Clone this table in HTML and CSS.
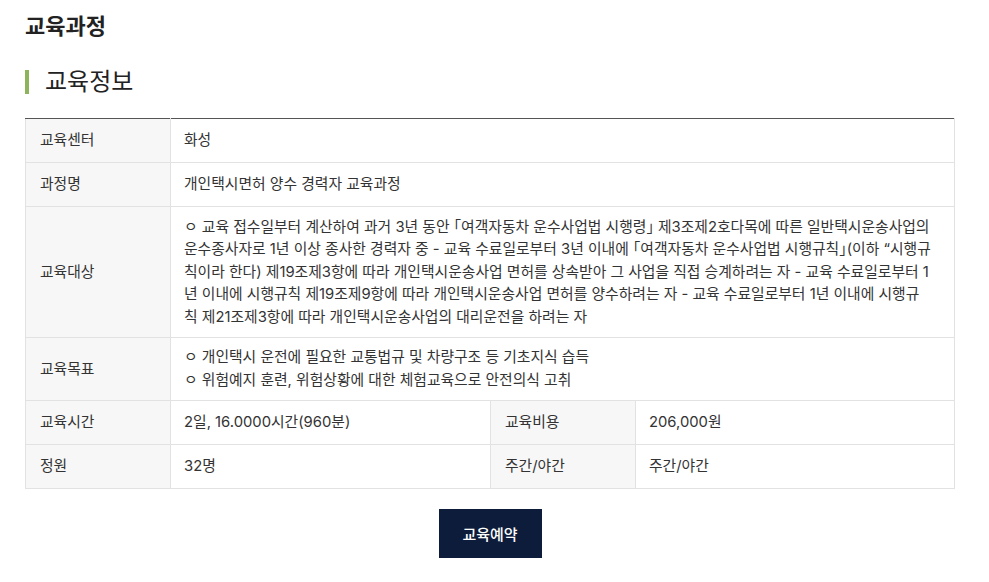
FILE: index.html
```html
<!DOCTYPE html>
<html lang="ko">
<head>
<meta charset="utf-8">
<link rel="stylesheet" href="styles.css">
</head>
<body>
<div class="page">
  <h1 class="page-title">교육과정</h1>
  <h2 class="section-title">교육정보</h2>
  <table class="info">
    <colgroup>
      <col class="c-label"><col class="c-val"><col class="c-label"><col>
    </colgroup>
    <tr><th>교육센터</th><td colspan="3">화성</td></tr>
    <tr><th>과정명</th><td colspan="3">개인택시면허 양수 경력자 교육과정</td></tr>
    <tr><th>교육대상</th><td colspan="3">ㅇ 교육 접수일부터 계산하여 과거 3년 동안 <span class="br">「여객자동차 운수사업법 시행령」</span> 제3조제2호다목에 따른 일반택시운송사업의 운수종사자로 1년 이상 종사한 경력자 중 - 교육 수료일로부터 3년 이내에 <span class="br">「여객자동차 운수사업법 시행규칙」</span>(이하 “시행규칙이라 한다) 제19조제3항에 따라 개인택시운송사업 면허를 상속받아 그 사업을 직접 승계하려는 자 - 교육 수료일로부터 1년 이내에 시행규칙 제19조제9항에 따라 개인택시운송사업 면허를 양수하려는 자 - 교육 수료일로부터 1년 이내에 시행규<br>칙 제21조제3항에 따라 개인택시운송사업의 대리운전을 하려는 자</td></tr>
    <tr><th>교육목표</th><td colspan="3">ㅇ 개인택시 운전에 필요한 교통법규 및 차량구조 등 기초지식 습득<br>ㅇ 위험예지 훈련, 위험상황에 대한 체험교육으로 안전의식 고취</td></tr>
    <tr><th>교육시간</th><td>2일, 16.0000시간(960분)</td><th>교육비용</th><td>206,000원</td></tr>
    <tr><th>정원</th><td>32명</td><th>주간/야간</th><td>주간/야간</td></tr>
  </table>
  <div class="actions"><button class="btn">교육예약</button></div>
</div>
</body>
</html>
```

FILE: styles.css
```css
html, body { margin: 0; padding: 0; background: #fff; }
body {
  font-family: Inter, "Noto Sans CJK KR", "Noto Sans", sans-serif;
  color: #333;
}
.page { padding: 8px 34px 0 25px; }
.page-title {
  margin: 0;
  font-size: 22px;
  font-weight: 700;
  line-height: 36px;
  color: #222;
}
.section-title {
  margin: 26px 0 0;
  padding-left: 16px;
  border-left: 4px solid #8db35c;
  font-size: 24px;
  font-weight: 400;
  line-height: 24px;
  color: #222;
}
.info {
  margin-top: 24px;
  width: 930px;
  border-collapse: collapse;
  border-top: 1px solid #555;
  table-layout: fixed;
  font-size: 14.8px;
  line-height: 22.6px;
}
.c-label { width: 145px; }
.c-val { width: 320px; }
.info tr { height: 44px; }
.info th, .info td {
  border: 1px solid #e2e2e2;
  padding: 8.5px 12px 8.5px 13px;
  text-align: left;
  vertical-align: middle;
  font-weight: 400;
  color: #333;
}
.info tr:first-child th, .info tr:first-child td { border-top: 1px solid #555; }
.info th { background: #f7f7f7; padding-left: 14px; }
.br { font-feature-settings: "halt"; }
.actions { display: flex; justify-content: center; margin-top: 20px; }
.btn {
  width: 103px;
  height: 49px;
  border: 0;
  background: #0c1c3a;
  color: #fff;
  font-family: inherit;
  font-size: 15px;
  font-weight: 500;
}
```
